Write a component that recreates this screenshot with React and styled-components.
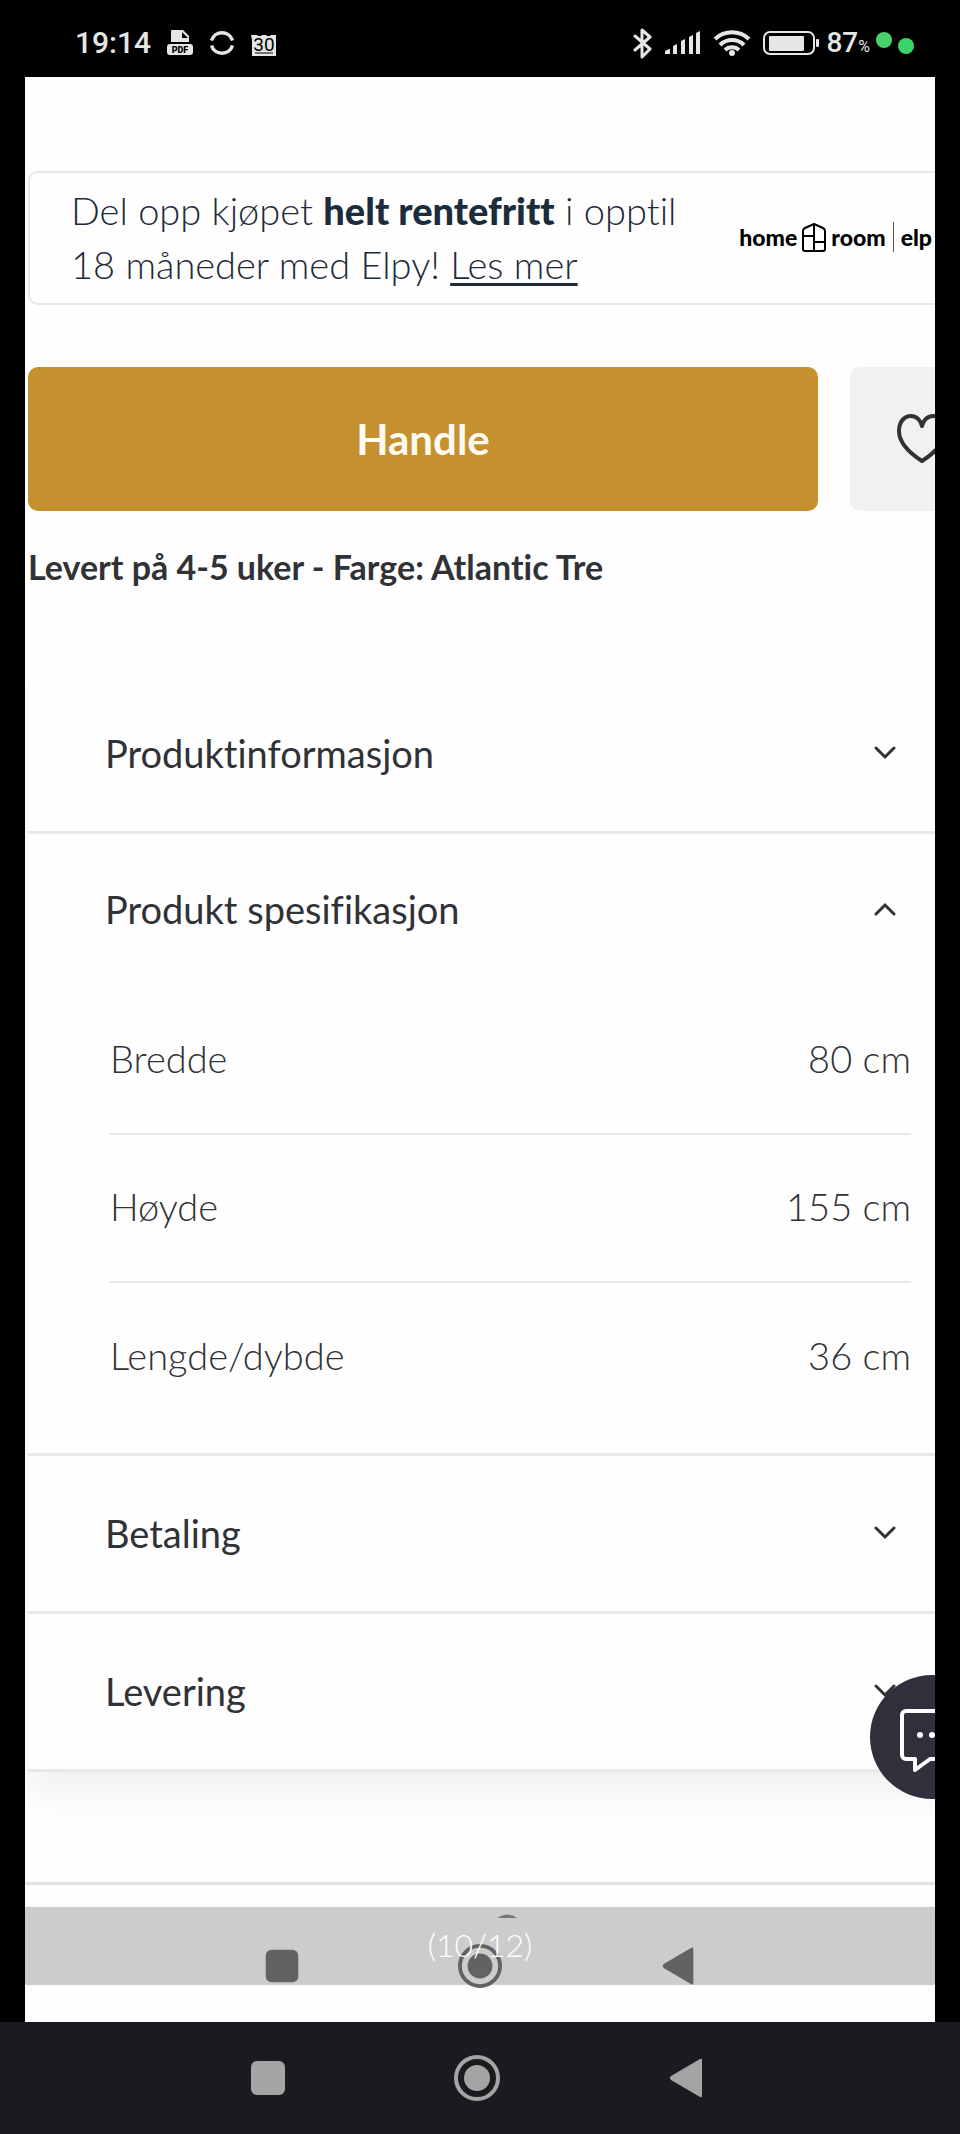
import React, { useState } from "react";
import styled, { createGlobalStyle } from "styled-components";

const sections = [
  { id: "info", title: "Produktinformasjon" },
  {
    id: "spec",
    title: "Produkt spesifikasjon",
    rows: [
      ["Bredde", "80 cm"],
      ["Høyde", "155 cm"],
      ["Lengde/dybde", "36 cm"],
    ],
  },
  { id: "payment", title: "Betaling" },
  { id: "delivery", title: "Levering" },
];

function StatusBar() {
  return (
    <Status>
      <StatusGroup $gap={16}>
        <Clock>19:14</Clock>
        <svg width="26" height="26" viewBox="0 0 26 26">
          <path d="M4 1q0-1 1-1h11l6 6v6H4z" fill="#e6e6e6" />
          <path d="M15 2v6h6z" fill="#000" />
          <rect x="0" y="14" width="26" height="11" rx="3" fill="#e6e6e6" />
          <text x="13" y="23" textAnchor="middle" fontFamily="Roboto, sans-serif" fontSize="9" fontWeight="900" fill="#000">PDF</text>
        </svg>
        <svg width="26" height="26" viewBox="0 0 26 26" fill="none" stroke="#e6e6e6" strokeWidth="3.5">
          <path d="M2.5 10.5a11 11 0 0 1 21 0" />
          <path d="M2.5 15.5a11 11 0 0 0 21 0" />
        </svg>
        <svg width="26" height="26" viewBox="0 -4 26 26">
          <path d="M0 1h6l1 1h3l1-1h4l1 1h3l1-1h5v21H1V6z" fill="#e6e6e6" />
          <text x="13" y="17" textAnchor="middle" fontFamily="Roboto, sans-serif" fontSize="19" fill="#000">30</text>
          <path d="M4 19h18" stroke="#000" strokeWidth="1" />
        </svg>
      </StatusGroup>
      <StatusGroup $gap={12}>
        <svg width="20" height="32" viewBox="0 0 20 32" fill="none" stroke="#e6e6e6" strokeWidth="3" strokeLinejoin="round" strokeLinecap="round">
          <path d="M2 9l15 13-8 8V3l8 7L2 23" />
        </svg>
        <svg width="36" height="24" viewBox="0 0 36 24" fill="#e6e6e6">
          <path d="M0 21q0-2 5-3v5H0zM8 15l4-2v10H8zM16 10l4-2v15h-4zM24 6l4-2v19h-4zM31 2l4-2v23h-4z" />
        </svg>
        <svg width="38" height="28" viewBox="0 0 38 28" fill="none" stroke="#e6e6e6" strokeWidth="4">
          <path d="M2 10a25 25 0 0 1 34 0M7 16a17 17 0 0 1 24 0M12 21a10 10 0 0 1 14 0" />
          <circle cx="19" cy="24" r="2" fill="#e6e6e6" strokeWidth="2" />
        </svg>
        <svg width="57" height="26" viewBox="0 0 57 26">
          <rect x="1" y="2" width="50" height="22" rx="6" fill="none" stroke="#e6e6e6" strokeWidth="2" />
          <rect x="6" y="6" width="35" height="15" rx="1" fill="#e6e6e6" />
          <rect x="53" y="9" width="3" height="8" rx="1" fill="#e6e6e6" />
        </svg>
        <Battery>
          87<small>%</small>
        </Battery>
        <svg width="38" height="22" viewBox="0 0 38 22">
          <circle cx="8" cy="8" r="8" fill="#47d26c" />
          <circle cx="30" cy="14" r="8" fill="#3bd468" />
        </svg>
      </StatusGroup>
    </Status>
  );
}

function PartnerLogos() {
  return (
    <Partners>
      home
      <svg width="24" height="30" viewBox="0 0 24 30" fill="none" stroke="#000" strokeWidth="2" strokeLinejoin="round">
        <path d="M1 9q0-2 2-3l9-4 9 4q2 1 2 3v18a2 2 0 0 1-2 2H3a2 2 0 0 1-2-2zM12 2v27M1 14h11M12 20h11" />
      </svg>
      room
      <Separator />
      elp
    </Partners>
  );
}

function Section({ title, rows }) {
  const [open, setOpen] = useState(Boolean(rows));
  return (
    <Panel>
      <PanelHeader type="button" aria-expanded={open} $open={open} onClick={() => setOpen(!open)}>
        {title}
        <Chevron $open={open} width="22" height="14" viewBox="0 0 22 14">
          <path d="M2 2l9 9 9-9" />
        </Chevron>
      </PanelHeader>
      {open && rows && (
        <SpecTable>
          <tbody>
            {rows.map(([name, value]) => (
              <tr key={name}>
                <th scope="row">{name}</th>
                <td>{value}</td>
              </tr>
            ))}
          </tbody>
        </SpecTable>
      )}
    </Panel>
  );
}

function NavIcons({ size }) {
  return (
    <>
      <button type="button" aria-label="Siste apper">
        <svg width={size} height={size} viewBox="0 0 46 46">
          <rect x="6" y="6" width="34" height="34" rx="6" />
        </svg>
      </button>
      <button type="button" aria-label="Hjem">
        <svg width={size} height={size} viewBox="0 0 46 46">
          <circle cx="23" cy="23" r="21" fill="none" stroke="currentColor" strokeWidth="4" />
          <circle cx="23" cy="23" r="13" />
        </svg>
      </button>
      <button type="button" aria-label="Tilbake">
        <svg width={size} height={size} viewBox="0 0 46 46">
          <path d="M8 21L37 4q2-1 2 1v36q0 2-2 1L8 25q-2-2 0-4z" />
        </svg>
      </button>
    </>
  );
}

export default function App() {
  return (
    <Phone>
      <GlobalStyle />
      <StatusBar />
      <Screen>
        <Product>
          <Promo>
            <p>
              Del opp kjøpet <strong>helt rentefritt</strong> i opptil
              <br />
              18 måneder med Elpy! <a href="#elpy">Les mer</a>
            </p>
            <PartnerLogos />
          </Promo>
          <Actions>
            <BuyButton type="button">Handle</BuyButton>
            <FavoriteButton type="button" aria-label="Legg til i favoritter">
              <svg width="52" height="50" viewBox="0 0 52 50" fill="none" stroke="#303236" strokeWidth="4" strokeLinejoin="round">
                <path d="M26 47C12 38 3 28 3 17 3 8 8 2 15 2c6 0 10 5 11 10C27 7 31 2 37 2c7 0 12 6 12 15 0 11-9 21-23 30z" />
              </svg>
            </FavoriteButton>
          </Actions>
          <DeliveryNote>Levert på 4-5 uker - Farge: Atlantic Tre</DeliveryNote>
        </Product>
        <Accordion>
          {sections.map((section) => (
            <Section key={section.id} title={section.title} rows={section.rows} />
          ))}
        </Accordion>
        <Footer />
        <Viewer>
          <Bump width="20" height="4" viewBox="0 0 20 4">
            <path d="M0 4Q10-3 20 4z" fill="#777" />
          </Bump>
          <InnerNav>
            <NavIcons size={44} />
          </InnerNav>
          <Counter>(10/12)</Counter>
        </Viewer>
        <ChatButton type="button" aria-label="Chat">
          <svg width="64" height="64" viewBox="0 0 64 64" fill="none" stroke="#fff" strokeWidth="4" strokeLinejoin="round">
            <path d="M6 2h52a4 4 0 0 1 4 4v40a4 4 0 0 1-4 4H30L15 61V50H6a4 4 0 0 1-4-4V6a4 4 0 0 1 4-4z" />
            <g fill="#fff" stroke="none">
              <circle cx="20" cy="26" r="3" />
              <circle cx="32" cy="26" r="3" />
              <circle cx="44" cy="26" r="3" />
            </g>
          </svg>
        </ChatButton>
      </Screen>
      <SystemNav>
        <NavIcons size={46} />
      </SystemNav>
    </Phone>
  );
}

const GlobalStyle = createGlobalStyle`
  * {
    box-sizing: border-box;
  }
  body {
    margin: 0;
    background: #000;
    font-family: Lato, "Open Sans", sans-serif;
    font-variant-ligatures: none;
    color: #303236;
  }
  button {
    font: inherit;
    font-variant-ligatures: none;
    color: inherit;
    border: none;
    background: none;
    padding: 0;
    cursor: pointer;
  }
  svg {
    display: block;
    flex: none;
  }
  p {
    margin: 0;
  }
`;

const Phone = styled.div`
  display: flex;
  flex-direction: column;
  min-height: 100vh;
  background: #000;
`;

const Status = styled.header`
  display: flex;
  justify-content: space-between;
  align-items: center;
  height: 77px;
  padding: 8px 46px 0 75px;
  font-family: Roboto, sans-serif;
  color: #e6e6e6;
`;
const StatusGroup = styled.div`
  display: flex;
  align-items: center;
  gap: ${({ $gap }) => $gap}px;
`;
const Clock = styled.time`
  font-size: 30px;
  font-weight: 500;
`;
const Battery = styled.span`
  font-size: 28px;
  font-weight: 500;
  margin: 0 -6px;
  small {
    font-size: 16px;
    font-weight: 400;
  }
`;

const Screen = styled.main`
  position: relative;
  flex: 1;
  display: flex;
  flex-direction: column;
  margin: 0 25px;
  overflow: hidden;
  background: #fefefe;
`;

/* wider than the screen, the right side is cut off */
const Product = styled.section`
  margin-right: -59px;
  padding: 94px 0 0 3px;
`;
const Promo = styled.div`
  display: flex;
  justify-content: space-between;
  align-items: center;
  padding: 10px 60px 12px 41px;
  border: 2px solid #e6e8ea;
  border-radius: 10px;
  color: #1f2b3a;
  font-size: 38px;
  font-weight: 300;
  line-height: 54px;
  strong {
    font-weight: 900;
    color: #1c2c3c;
  }
  a {
    color: inherit;
    text-decoration-thickness: 3px;
    text-underline-offset: 4px;
  }
`;
const Partners = styled.div`
  display: flex;
  align-items: center;
  gap: 5px;
  color: #000;
  font-size: 23px;
  font-weight: 900;
  line-height: 30px;
`;
const Separator = styled.i`
  width: 1px;
  height: 30px;
  margin: 0 2px;
  background: #555;
`;

const Actions = styled.div`
  display: flex;
  gap: 32px;
  margin-top: 62px;
`;
const BuyButton = styled.button`
  flex: 1;
  height: 144px;
  border-radius: 10px;
  background: #c5912f;
  color: #fffaf0;
  font-size: 42px;
  font-weight: 700;
`;
const FavoriteButton = styled.button`
  display: flex;
  align-items: center;
  justify-content: center;
  width: 144px;
  height: 144px;
  border-radius: 10px;
  background: #f1f1f1;
`;
const DeliveryNote = styled.p`
  margin-top: 34px;
  font-size: 34px;
  font-weight: 700;
  line-height: 44px;
`;

const Accordion = styled.section`
  margin: 87px -59px 0 3px;
  box-shadow: 0 20px 36px rgba(0, 0, 0, 0.06);
`;
const Panel = styled.div`
  border-bottom: 3px solid #e8e8e8;
`;
const PanelHeader = styled.button`
  display: flex;
  justify-content: space-between;
  align-items: center;
  width: 100%;
  height: ${({ $open }) => ($open ? 152 : 155)}px;
  padding: 0 98px 2px 77px;
  font-size: 38px;
  font-weight: 400;
`;
const Chevron = styled.svg`
  fill: none;
  stroke: #303236;
  stroke-width: 3;
  stroke-linecap: round;
  transform: ${({ $open }) => ($open ? "rotate(180deg)" : "none")};
`;
const SpecTable = styled.table`
  width: calc(100% - 165px);
  margin: 0 83px 23px 82px;
  border-collapse: collapse;
  font-size: 38px;
  line-height: 44px;
  th,
  td {
    height: 148px;
    padding: 0 0 4px;
    font-weight: 300;
    text-align: left;
  }
  td {
    text-align: right;
  }
  tr + tr {
    border-top: 2px solid #e6e6e6;
  }
`;

const Footer = styled.footer`
  height: 25px;
  margin-top: 110px;
  border-top: 3px solid #e2e2e2;
`;

const Viewer = styled.div`
  position: relative;
  height: 78px;
  background: #ccc;
`;
const Bump = styled.svg`
  position: absolute;
  top: 7px;
  left: calc(50% + 17px);
`;
const InnerNav = styled.nav`
  position: absolute;
  top: 37px;
  left: 0;
  right: 0;
  display: flex;
  justify-content: center;
  gap: 154px;
  color: #626262;
  fill: currentColor;
`;
const Counter = styled.span`
  position: absolute;
  top: 18px;
  left: 0;
  right: 0;
  text-align: center;
  color: #fff;
  font-size: 32px;
  font-weight: 300;
  line-height: 40px;
`;

const ChatButton = styled.button`
  position: absolute;
  right: -59px;
  bottom: 223px;
  display: flex;
  align-items: center;
  justify-content: center;
  width: 124px;
  height: 124px;
  padding-top: 8px;
  border-radius: 50%;
  background: #2f303b;
`;

const SystemNav = styled.nav`
  display: flex;
  justify-content: center;
  align-items: center;
  gap: 163px;
  height: 112px;
  padding-right: 6px;
  background: #1b1a1e;
  color: #a4a4a4;
  fill: currentColor;
`;
